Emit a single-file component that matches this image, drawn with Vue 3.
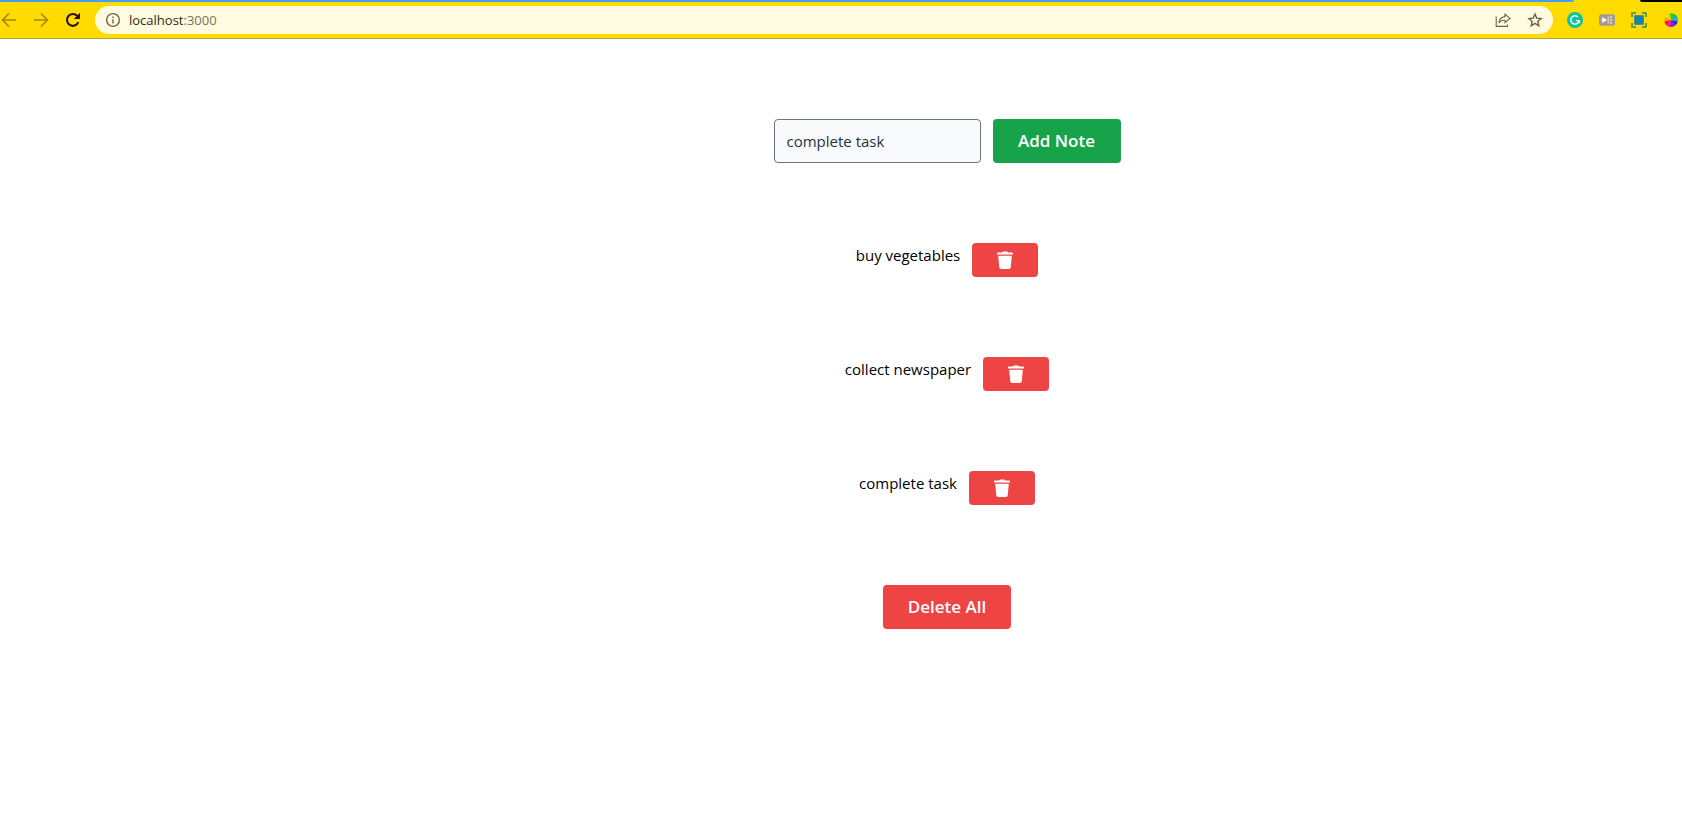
<script setup>
import { ref } from 'vue'

const draft = ref('complete task')
const notes = ref([
  { id: 1, text: 'buy vegetables' },
  { id: 2, text: 'collect newspaper' },
  { id: 3, text: 'complete task' },
])
let nextId = 4

function addNote() {
  const text = draft.value.trim()
  if (text) notes.value.push({ id: nextId++, text })
}
function removeNote(id) {
  notes.value = notes.value.filter((n) => n.id !== id)
}
</script>

<template>
  <div class="window">
    <header class="browser">
      <div class="tabs"><span class="tab-blue"></span><span class="tab-dark"></span></div>
      <div class="toolbar">
        <nav class="nav">
          <button type="button" class="icon dim" aria-label="Back">
            <svg viewBox="0 0 16 16"><path d="M15 8H2M8 1.5L1.5 8L8 14.5" /></svg>
          </button>
          <button type="button" class="icon dim" aria-label="Forward">
            <svg viewBox="0 0 16 16"><path d="M1 8H14M8 1.5L14.5 8L8 14.5" /></svg>
          </button>
          <button type="button" class="icon reload" aria-label="Reload">
            <svg viewBox="0 0 16 16">
              <path d="M13.3 10.2A5.9 5.9 0 1 1 12.2 3.9L13.6 5.4" />
              <path class="solid" d="M15 .8V7H8.8Z" />
            </svg>
          </button>
        </nav>
        <div class="omnibox">
          <button type="button" class="icon grey" aria-label="Site information">
            <svg viewBox="0 0 16 16">
              <circle cx="8" cy="8" r="6.4" />
              <path d="M8 7.2V11.5M8 4.4V6" />
            </svg>
          </button>
          <div class="address">localhost<span>:3000</span></div>
          <button type="button" class="icon grey share" aria-label="Share">
            <svg viewBox="0 0 16 16">
              <path d="M1.2 4.5V14.4H12.5V12.4M10 2.2L15 6.4L10 10.6V8.3C7 8.1 5.2 9 4 11C4.2 7.3 6.4 5 10 4.6Z" />
            </svg>
          </button>
          <button type="button" class="icon grey star" aria-label="Bookmark">
            <svg viewBox="0 0 16 16">
              <path d="M8 2L9.7 6.1L14.1 6.5L10.8 9.4L11.8 13.8L8 11.4L4.2 13.8L5.2 9.4L1.9 6.5L6.3 6.1Z" />
            </svg>
          </button>
        </div>
        <div class="extensions">
          <button type="button" class="icon" aria-label="Writing assistant">
            <svg viewBox="0 0 16 16">
              <circle cx="8" cy="8" r="8" fill="#11c39a" stroke="none" />
              <path d="M11 5A4.2 4.2 0 1 0 12.1 8.6H9.2M12.2 8.2V11.2" stroke="#fff" stroke-width="1.4" />
            </svg>
          </button>
          <button type="button" class="icon" aria-label="Media">
            <svg viewBox="0 0 16 16">
              <rect x="0" y="2.2" width="16" height="11.6" rx="2.2" fill="#a69b92" stroke="none" />
              <path d="M3.2 5.2L8 8L3.2 10.8Z" fill="#fff" stroke="none" />
              <path d="M9.2 4.5V11.5" stroke="#e6e0d6" stroke-width="1" />
              <path d="M11 5H13M11 8H13M11 11H13" stroke="#e6e0d6" stroke-width="1.3" />
            </svg>
          </button>
          <button type="button" class="icon" aria-label="Capture">
            <svg viewBox="0 0 16 16">
              <rect x="3.2" y="3.2" width="9.6" height="9.6" fill="#1683ad" stroke="none" />
              <path d="M1 5V1H5M11 1H15V5M15 11V15H11M5 15H1V11" stroke="#4d8b48" />
            </svg>
          </button>
          <button type="button" class="icon" aria-label="Colour picker">
            <svg viewBox="0 0 16 16" class="wheel">
              <path d="M8 8L1.3 9.5A7 7 0 0 1 2.5 5Z" fill="#f7a01c" />
              <path d="M8 8L4.5 3.5A7 7 0 0 1 7 1.6Z" fill="#c9d81c" />
              <path d="M8 8L7 1.3A7 7 0 0 1 11 1.7Z" fill="#38c41c" />
              <path d="M8 8L11 1.7A7 7 0 0 1 14.2 4.8Z" fill="#11b877" />
              <path d="M8 8L14.2 4.8A7 7 0 0 1 14.8 9.5Z" fill="#12b3d6" />
              <path d="M8 8L14.8 9.5A7 7 0 0 1 12 13.7Z" fill="#202be0" />
              <path d="M8 8L12 13.7A7 7 0 0 1 8 15Z" fill="#7d1be0" />
              <path d="M8 8V15A7 7 0 0 1 4 13.7Z" fill="#e015c4" />
              <path d="M8 8L4 13.7A7 7 0 0 1 1.3 9.5Z" fill="#f01830" />
            </svg>
          </button>
        </div>
      </div>
    </header>

    <main class="page">
      <form class="entry" @submit.prevent="addNote">
        <input v-model="draft" type="text" aria-label="Note" />
        <button type="submit" class="btn green">Add Note</button>
      </form>
      <ul class="notes">
        <li v-for="note in notes" :key="note.id">
          <span>{{ note.text }}</span>
          <button type="button" class="remove" :aria-label="'Delete ' + note.text" @click="removeNote(note.id)">
            <svg viewBox="0 0 18 18">
              <path d="M1 2.5Q1 1.5 2 1.5H6L7 .5H11L12 1.5H16Q17 1.5 17 2.5V3.5H1ZM2.2 4.8H15.8L14.8 16Q14.6 18 12.8 18H5.2Q3.4 18 3.2 16Z" />
            </svg>
          </button>
        </li>
      </ul>
      <button type="button" class="btn red" @click="notes = []">Delete All</button>
    </main>
  </div>
</template>

<style>
body {
  margin: 0;
  background: #fff;
}
</style>

<style scoped>
* {
  box-sizing: border-box;
}
.window {
  min-height: 100vh;
  overflow: hidden;
  font-family: "Open Sans", "Noto Sans", sans-serif;
  color: #000;
}
button {
  border: 0;
  padding: 0;
  font-family: inherit;
  cursor: pointer;
}
.browser {
  background: #ffdb00;
  border-bottom: 1px solid #b5a24a;
}
.tabs {
  display: flex;
  justify-content: space-between;
  height: 2px;
}
.tab-blue {
  width: calc(100% - 108px);
  background: #4a9af0;
  border-bottom-right-radius: 2px;
}
.tab-dark {
  width: 42px;
  background: #000;
  border-bottom-left-radius: 2px;
}
.toolbar {
  display: flex;
  align-items: center;
  height: 36px;
  padding-bottom: 1px;
}
.nav {
  display: flex;
  gap: 16px;
  width: 95px;
  padding-left: 1px;
}
.icon {
  flex: none;
  width: 16px;
  height: 16px;
  background: none;
}
.icon svg {
  display: block;
  width: 16px;
  height: 16px;
  fill: none;
  stroke: currentColor;
  stroke-width: 1.6;
}
.dim {
  color: #a78503;
}
.reload {
  color: #2a1205;
}
.reload svg {
  stroke-width: 2.1;
}
.reload .solid {
  fill: currentColor;
  stroke: none;
}
.grey {
  color: #6a6449;
}
.grey svg {
  stroke-width: 1.4;
}
.share svg {
  stroke-width: 1.1;
}
.icon .wheel {
  stroke: none;
}
.omnibox {
  flex: 1;
  display: flex;
  align-items: center;
  height: 28px;
  padding: 0 10px;
  border-radius: 14px;
  background: #fffbe0;
}
.address {
  flex: 1;
  padding-left: 8px;
  font-size: 13px;
  line-height: 20px;
  color: #2c2a1c;
}
.address span {
  color: #77735c;
}
.star {
  margin-left: 16px;
}
.extensions {
  display: flex;
  gap: 16px;
  padding: 0 3px 0 14px;
}
.page {
  display: flex;
  flex-direction: column;
  align-items: center;
  gap: 80px;
  padding: 80px 0 80px 212px;
}
.entry {
  display: flex;
  gap: 12px;
}
.entry input {
  width: 207px;
  height: 44px;
  padding: 0 12px;
  border: 1px solid #6b7280;
  border-radius: 4px;
  background: #f9fafb;
  color: #27303f;
  font-family: inherit;
  font-size: 15px;
  outline: none;
}
.btn {
  min-width: 128px;
  height: 44px;
  padding: 0 24px;
  border-radius: 4px;
  color: #fff;
  font-size: 17px;
  font-weight: 600;
  line-height: 28px;
}
.green {
  background: #16a34a;
}
.red {
  background: #ef4444;
}
.notes {
  display: flex;
  flex-direction: column;
  align-items: center;
  gap: 80px;
  margin: 0;
  padding: 0;
  list-style: none;
}
.notes li {
  display: flex;
  align-items: flex-start;
  gap: 12px;
  font-size: 15px;
  line-height: 24px;
}
.remove {
  display: flex;
  align-items: center;
  justify-content: center;
  width: 66px;
  height: 34px;
  border-radius: 4px;
  background: #ef4444;
}
.remove svg {
  width: 18px;
  height: 18px;
  fill: #fff;
}
</style>
